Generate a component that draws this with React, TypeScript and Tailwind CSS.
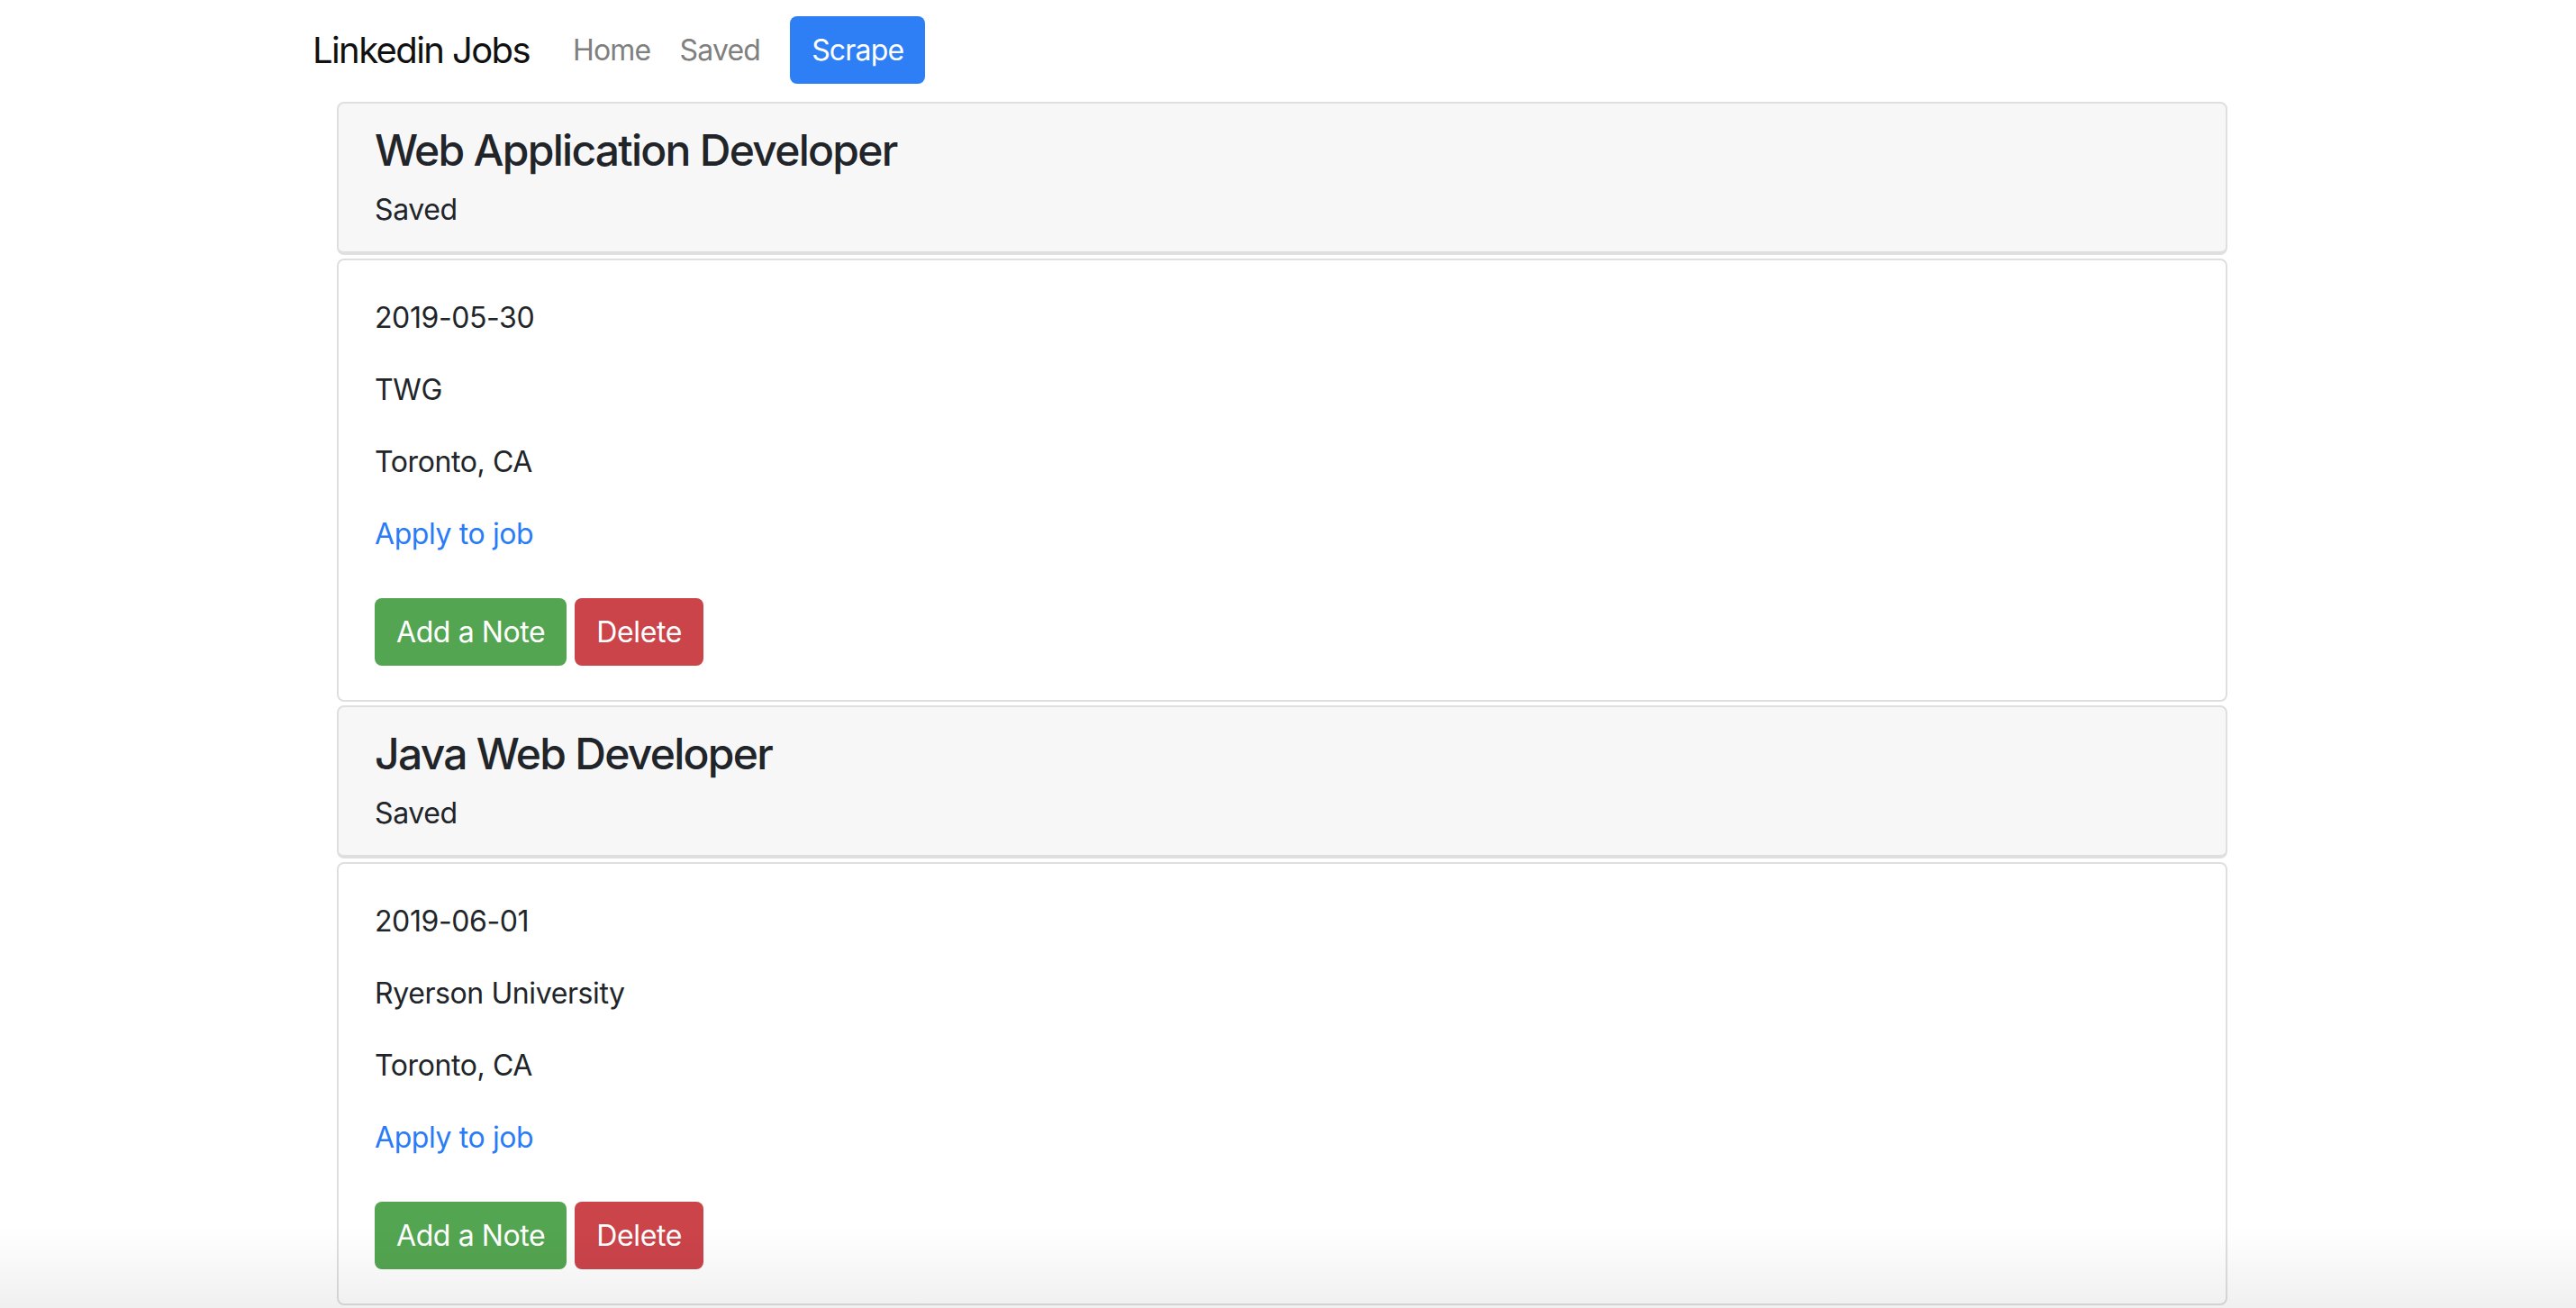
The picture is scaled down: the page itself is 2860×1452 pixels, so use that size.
const jobs = [
    {
        title: "Web Application Developer",
        status: "Saved",
        date: "2019-05-30",
        company: "TWG",
        location: "Toronto, CA",
    },
    {
        title: "Java Web Developer",
        status: "Saved",
        date: "2019-06-01",
        company: "Ryerson University",
        location: "Toronto, CA",
    },
];

type Job = (typeof jobs)[number];

function NavBar() {
    return (
        <nav className="flex items-center pl-[347px] pt-[18px] pb-[20px]">
            <a className="text-[40px] leading-[60px] tracking-[-0.04em] text-[#111111] mr-[32px]" href="#">
                Linkedin Jobs
            </a>
            <a className="px-[16px] text-[32px] leading-[48px] tracking-[-0.025em] text-[#7f7f7f]" href="#">
                Home
            </a>
            <a className="px-[16px] text-[32px] leading-[48px] tracking-[-0.025em] text-[#7f7f7f]" href="#">
                Saved
            </a>
            <button className="ml-[17px] h-[75px] px-[24px] rounded-[8px] bg-[#2e7ff6] text-white text-[32px] leading-[48px] tracking-[-0.025em]">
                Scrape
            </button>
        </nav>
    );
}

function JobCard({ job }: { job: Job }) {
    return (
        <>
            <div className="border-2 border-b-4 border-[#dfdfdf] bg-[#f7f7f7] rounded-[8px] px-[40px] pt-[24px] pb-[22px]">
                <h4 className="text-[48px] leading-[56px] tracking-[-0.036em] font-medium text-[#212529] mb-[14px]">
                    {job.title}
                </h4>
                <p className="text-[32px] leading-[48px]">{job.status}</p>
            </div>
            <div className="mt-[4px] mb-[4px] border-2 border-[#dfdfdf] rounded-[8px] px-[40px] pt-[40px] pb-[38px]">
                <p className="text-[32px] leading-[48px] mb-[32px]">{job.date}</p>
                <p className="text-[32px] leading-[48px] mb-[32px]">{job.company}</p>
                <p className="text-[32px] leading-[48px] mb-[32px]">{job.location}</p>
                <p className="text-[32px] leading-[48px] mb-[47px]">
                    <a className="text-[#2a7cf6]" href="#">
                        Apply to job
                    </a>
                </p>
                <div className="flex gap-[9px]">
                    <button className="h-[75px] px-[24px] rounded-[8px] bg-[#53a551] text-white text-[32px] leading-[48px]">
                        Add a Note
                    </button>
                    <button className="h-[75px] px-[24px] rounded-[8px] bg-[#cb444a] text-white text-[32px] leading-[48px]">
                        Delete
                    </button>
                </div>
            </div>
        </>
    );
}

export default function App() {
    return (
        <div className="relative h-[1452px] overflow-hidden bg-white font-['Inter',sans-serif] text-[#212529] tracking-[-0.025em]">
            <NavBar />
            <div className="ml-[374px] w-[2099px] flex flex-col">
                {jobs.map((job) => (
                    <JobCard key={job.title} job={job} />
                ))}
            </div>
            <div className="pointer-events-none absolute bottom-0 left-0 right-0 h-[90px] bg-gradient-to-b from-transparent to-black/[0.06]" />
        </div>
    );
}
